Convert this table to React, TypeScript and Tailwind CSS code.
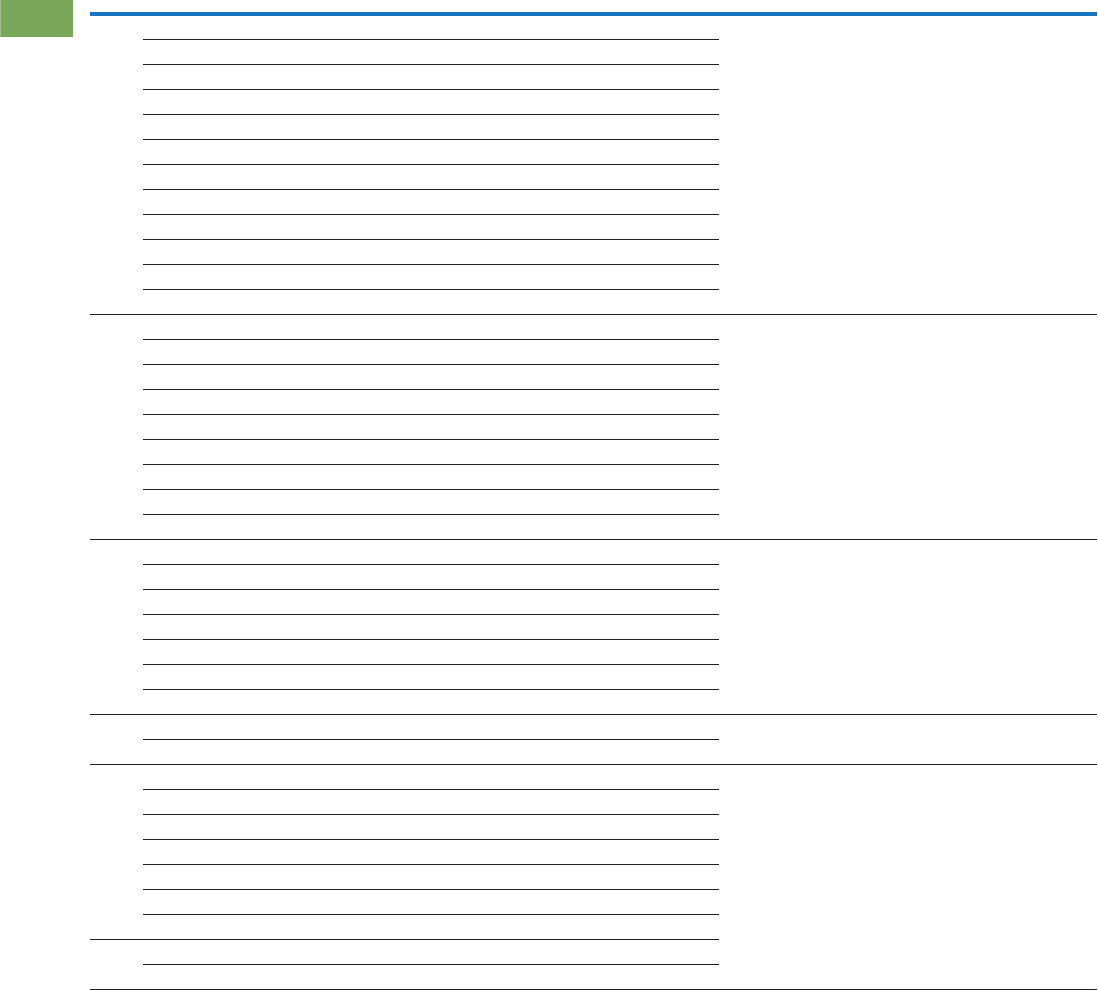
import React from "react";

const sections: number[][] = [[12], [9], [7], [2], [7, 2]];

export default function App() {
  let first = true;
  return (
    <div className="flex items-start w-[1098px] min-h-[990px] bg-white font-['Liberation_Sans',sans-serif]">
      <div className="w-[73px] h-[37px] shrink-0 bg-[#79a659] border-l border-l-[#a3c48a]" />
      <div className="ml-[17px] w-[1007px] flex flex-col shrink-0">
        <div className="mt-[12px] h-[4px] shrink-0 bg-[#1a75c1]" />
        {sections.map((groups, si) => (
          <div key={si} className="flex shrink-0">
            <div className="flex flex-col w-[629px]">
              {groups.map((count, gi) => (
                <div key={gi} className="flex border-b border-b-[#231f20]">
                  <div className="w-[53px]" />
                  <div className="w-[576px] flex flex-col">
                    {Array.from({ length: count }).map((_, ri) => {
                      const isFirst = first;
                      first = false;
                      const isLast = ri === count - 1;
                      return (
                        <div
                          key={ri}
                          className={
                            (isFirst || isLast ? "h-[24px] " : "h-[25px] ") +
                            (isLast ? "" : "border-b border-b-[#231f20]")
                          }
                        />
                      );
                    })}
                  </div>
                </div>
              ))}
            </div>
            <div className="w-[378px] border-b border-b-[#231f20]" />
          </div>
        ))}
      </div>
    </div>
  );
}
